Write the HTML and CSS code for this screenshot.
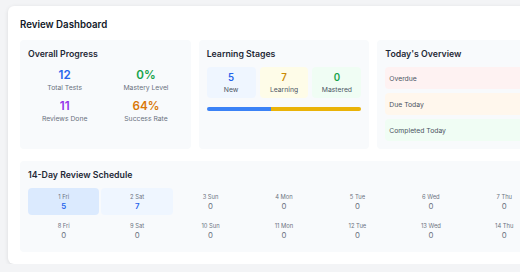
FILE: index.html
```
<!DOCTYPE html>
<html>
<head>
    <title>Review Dashboard</title>
    <link rel="stylesheet" href="styles.css">
</head>
<body>
    <div class="dashboard">
        <h1 class="title">Review Dashboard</h1>
        <div class="top-row">
            <!-- Overall numbers -->
            <div class="panel">
                <h2>Overall Progress</h2>
                <div class="stats">
                    <div class="stat">
                        <div class="stat-value blue">12</div>
                        <div class="stat-label">Total Tests</div>
                    </div>
                    <div class="stat">
                        <div class="stat-value green">0%</div>
                        <div class="stat-label">Mastery Level</div>
                    </div>
                    <div class="stat">
                        <div class="stat-value purple">11</div>
                        <div class="stat-label">Reviews Done</div>
                    </div>
                    <div class="stat">
                        <div class="stat-value orange">64%</div>
                        <div class="stat-label">Success Rate</div>
                    </div>
                </div>
            </div>
            <!-- Learning stages -->
            <div class="panel">
                <h2>Learning Stages</h2>
                <div class="stages">
                    <div class="stage stage-new">
                        <div class="stage-value">5</div>
                        <div class="stage-label">New</div>
                    </div>
                    <div class="stage stage-learning">
                        <div class="stage-value">7</div>
                        <div class="stage-label">Learning</div>
                    </div>
                    <div class="stage stage-mastered">
                        <div class="stage-value">0</div>
                        <div class="stage-label">Mastered</div>
                    </div>
                </div>
                <div class="stage-bar">
                    <div class="bar-new" style="width: 41.67%"></div>
                    <div class="bar-learning" style="width: 58.33%"></div>
                </div>
            </div>
            <!-- Today -->
            <div class="panel">
                <h2>Today's Overview</h2>
                <div class="today-list">
                    <div class="today-row overdue">Overdue</div>
                    <div class="today-row due">Due Today</div>
                    <div class="today-row done">Completed Today</div>
                </div>
            </div>
        </div>
        <div class="panel schedule">
            <h2>14-Day Review Schedule</h2>
            <div class="days">
                <div class="day today"><div class="day-name">1 Fri</div><div class="day-count active">5</div></div>
                <div class="day upcoming"><div class="day-name">2 Sat</div><div class="day-count active">7</div></div>
                <div class="day"><div class="day-name">3 Sun</div><div class="day-count">0</div></div>
                <div class="day"><div class="day-name">4 Mon</div><div class="day-count">0</div></div>
                <div class="day"><div class="day-name">5 Tue</div><div class="day-count">0</div></div>
                <div class="day"><div class="day-name">6 Wed</div><div class="day-count">0</div></div>
                <div class="day"><div class="day-name">7 Thu</div><div class="day-count">0</div></div>
                <div class="day"><div class="day-name">8 Fri</div><div class="day-count">0</div></div>
                <div class="day"><div class="day-name">9 Sat</div><div class="day-count">0</div></div>
                <div class="day"><div class="day-name">10 Sun</div><div class="day-count">0</div></div>
                <div class="day"><div class="day-name">11 Mon</div><div class="day-count">0</div></div>
                <div class="day"><div class="day-name">12 Tue</div><div class="day-count">0</div></div>
                <div class="day"><div class="day-name">13 Wed</div><div class="day-count">0</div></div>
                <div class="day"><div class="day-name">14 Thu</div><div class="day-count">0</div></div>
            </div>
        </div>
    </div>
</body>
</html>
```
FILE: styles.css
```
body {
    font-family: Inter, "Noto Sans", sans-serif;
    margin: 0;
    padding: 6px 0 0 8px;
    background-color: #f3f4f6;
    color: #1f2937;
    overflow: hidden;
}

h1, h2 {
    margin: 0;
}

.dashboard {
    width: 528px;
    padding: 12px;
    background-color: #fff;
    border-radius: 6px;
    box-shadow: 0 1px 4px rgba(0, 0, 0, 0.1);
}

.title {
    font-size: 9.7px;
    line-height: 14px;
    font-weight: 600;
    color: #111827;
    margin-bottom: 8px;
}

.top-row {
    display: grid;
    grid-template-columns: repeat(3, 1fr);
    gap: 8px;
    margin-bottom: 12px;
}

.panel {
    background-color: #f8fafc;
    border-radius: 4px;
    padding: 8px;
}

.panel h2 {
    font-size: 8.75px;
    line-height: 12px;
    font-weight: 600;
    color: #1f2937;
    margin-bottom: 7px;
}

/* Overall progress */
.stats {
    display: grid;
    grid-template-columns: 1fr 1fr;
    column-gap: 8px;
    row-gap: 5px;
    text-align: center;
}

.stat-value {
    font-size: 11.65px;
    line-height: 16px;
    font-weight: 600;
}

.stat-label {
    font-size: 6.8px;
    line-height: 10px;
    color: #6b7280;
}

.blue { color: #2563eb; }
.green { color: #16a34a; }
.purple { color: #9333ea; }
.orange { color: #d97706; }

/* Learning stages */
.stages {
    display: grid;
    grid-template-columns: repeat(3, 1fr);
    gap: 4px;
}

.stage {
    text-align: center;
    padding: 3px 0;
    border-radius: 4px;
}

.stage-value {
    font-size: 9.7px;
    line-height: 15px;
    font-weight: 600;
}

.stage-label {
    font-size: 6.8px;
    line-height: 10px;
    color: #4b5563;
}

.stage-new { background-color: #eff6ff; }
.stage-new .stage-value { color: #2563eb; }
.stage-learning { background-color: #fefce8; }
.stage-learning .stage-value { color: #ca8a04; }
.stage-mastered { background-color: #f0fdf4; }
.stage-mastered .stage-value { color: #16a34a; }

.stage-bar {
    display: flex;
    height: 4px;
    margin-top: 9px;
    border-radius: 2px;
    overflow: hidden;
    background-color: #e5e7eb;
}

.bar-new { background-color: #3b82f6; }
.bar-learning { background-color: #eab308; }

/* Today */
.today-list {
    display: flex;
    flex-direction: column;
    gap: 4px;
}

.today-row {
    height: 22px;
    display: flex;
    align-items: center;
    padding: 0 4px;
    border-radius: 4px;
    font-size: 6.8px;
    color: #4b5563;
}

.overdue { background-color: #fef2f2; }
.due { background-color: #fff7ed; }
.done { background-color: #f0fdf4; }

/* Schedule */
.days {
    display: grid;
    grid-template-columns: repeat(7, 1fr);
    gap: 2px;
}

.day {
    text-align: center;
    padding: 4px 0 3px;
    border-radius: 4px;
}

.day.today { background-color: #dbeafe; }
.day.upcoming { background-color: #eff6ff; }

.day-name {
    font-size: 5.8px;
    line-height: 9px;
    color: #6b7280;
}

.day-count {
    font-size: 7.8px;
    line-height: 11px;
    color: #6b7280;
}

.day-count.active {
    color: #2563eb;
    font-weight: 600;
}
```
